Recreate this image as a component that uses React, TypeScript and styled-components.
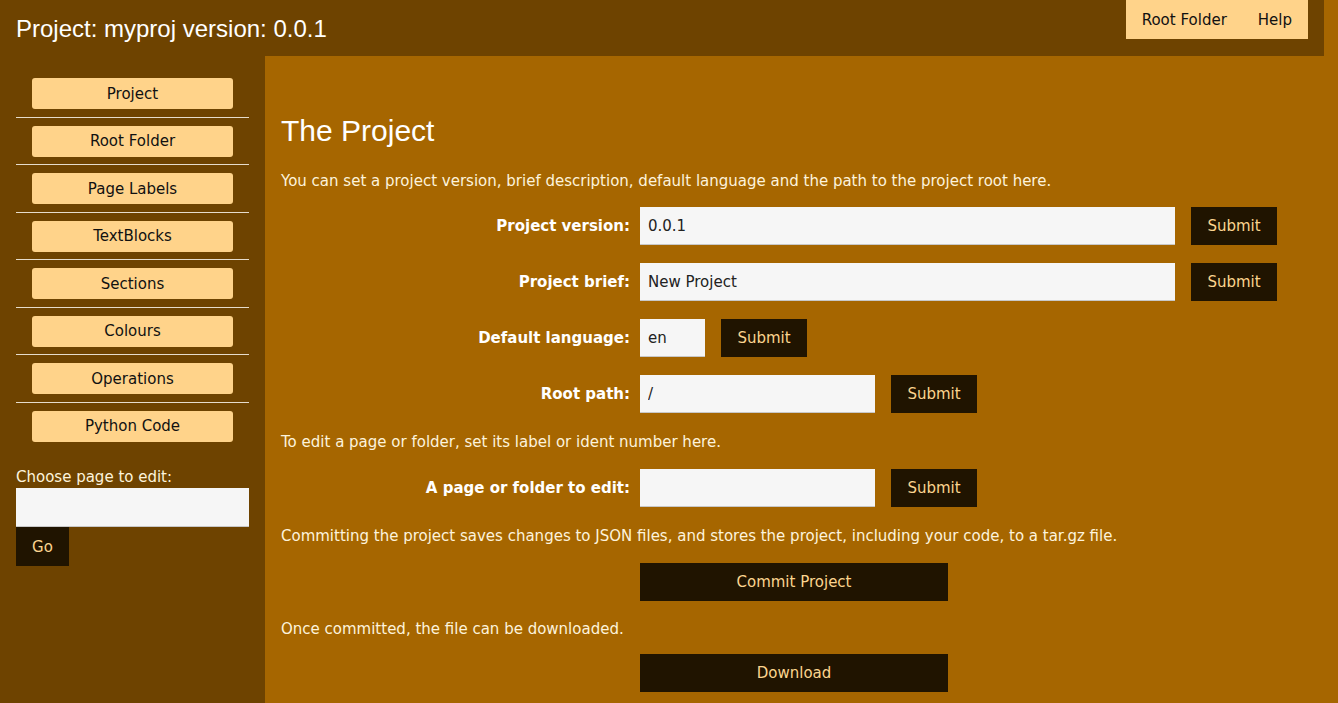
import React from "react";
import styled, { createGlobalStyle } from "styled-components";

const Global = createGlobalStyle`
  html, body { margin: 0; padding: 0; background: #a66600; }
  body { font-family: "DejaVu Sans", Verdana, sans-serif; font-size: 15px; }
  * { box-sizing: border-box; }
`;

const Page = styled.div`
  display: grid;
  grid-template-columns: 265px 1fr;
  grid-template-rows: 56px 1fr;
  height: 100vh;
  overflow: hidden;
`;

const Header = styled.header`
  grid-column: 1 / 3;
  background: #6e4300;
  margin-right: 14px;
  display: flex;
  justify-content: space-between;
  align-items: flex-start;
  padding-left: 16px;
  padding-right: 16px;
`;

const Title = styled.h1`
  margin: 0;
  padding-top: 15px;
  font-family: "Liberation Sans", Arial, sans-serif;
  font-weight: normal;
  font-size: 24px;
  line-height: 28px;
  color: #ffffff;
`;

const TopNav = styled.nav`
  display: flex;
  gap: 31px;
  background: #ffd38a;
  height: 39px;
  align-items: center;
  padding: 0 16px;
`;

const TopLink = styled.a`
  color: #111;
  font-size: 15px;
  text-decoration: none;
  cursor: pointer;
`;

const Sidebar = styled.aside`
  background: #6e4300;
  padding: 14px 16px 0 16px;
  display: flex;
  flex-direction: column;
`;

const NavItem = styled.div`
  padding: 8px 16px 7.5px;
  border-bottom: 1px solid #e6dccb;
  &:last-of-type { border-bottom: none; }
`;

const NavButton = styled.button`
  width: 100%;
  height: 31px;
  border: none;
  border-radius: 3px;
  background: #ffd38a;
  color: #111;
  font-family: "DejaVu Sans", Verdana, sans-serif;
  font-size: 15px;
  cursor: pointer;
`;

const ChooseLabel = styled.label`
  display: block;
  margin-top: 18px;
  color: #fdf3dc;
  font-size: 15px;
  line-height: 20px;
`;

const SideInput = styled.input`
  display: block;
  width: 100%;
  height: 39px;
  margin-top: 1px;
  border: none;
  border-bottom: 1px solid #c8c8c8;
  background: #f6f6f6;
`;

const GoButton = styled.button`
  align-self: flex-start;
  width: 53px;
  height: 39px;
  border: none;
  background: #201400;
  color: #fcd58f;
  font-family: "DejaVu Sans", Verdana, sans-serif;
  font-size: 15px;
`;

const Main = styled.main`
  padding: 58px 16px 0 16px;
  color: #fdf3dc;
`;

const Heading = styled.h2`
  margin: 0;
  font-family: "Liberation Sans", Arial, sans-serif;
  font-weight: normal;
  font-size: 30px;
  line-height: 34px;
  color: #ffffff;
`;

const Para = styled.p`
  margin: 0;
  font-size: 15px;
  line-height: 20px;
  padding-top: ${(p: { $top: number }) => p.$top}px;
`;

const Form = styled.div`
  display: grid;
  grid-template-columns: 349px auto;
  column-gap: 10px;
  row-gap: 18px;
  align-items: center;
  margin-top: ${(p: { $top: number }) => p.$top}px;
`;

const Label = styled.label`
  text-align: right;
  font-weight: bold;
  color: #ffffff;
  font-size: 15px;
`;

const Field = styled.div`
  display: flex;
  align-items: center;
  gap: 16px;
`;

const TextInput = styled.input<{ $w: number }>`
  width: ${(p) => p.$w}px;
  height: 38px;
  border: none;
  border-bottom: 1px solid #c8c8c8;
  background: #f6f6f6;
  padding: 0 8px;
  font-family: "DejaVu Sans", Verdana, sans-serif;
  font-size: 15px;
  color: #222;
`;

const DarkButton = styled.button<{ $w: number }>`
  width: ${(p) => p.$w}px;
  height: 38px;
  border: none;
  background: #201400;
  color: #fcd58f;
  font-family: "DejaVu Sans", Verdana, sans-serif;
  font-size: 15px;
  cursor: pointer;
`;

const WideRow = styled.div`
  padding-left: 359px;
  margin-top: ${(p: { $top: number }) => p.$top}px;
`;

const navItems = [
  "Project",
  "Root Folder",
  "Page Labels",
  "TextBlocks",
  "Sections",
  "Colours",
  "Operations",
  "Python Code",
];

export default function App() {
  return (
    <>
      <Global />
      <Page>
        <Header>
          <Title>Project: myproj version: 0.0.1</Title>
          <TopNav>
            <TopLink>Root Folder</TopLink>
            <TopLink>Help</TopLink>
          </TopNav>
        </Header>
        <Sidebar>
          {navItems.map((n) => (
            <NavItem key={n}>
              <NavButton>{n}</NavButton>
            </NavItem>
          ))}
          <ChooseLabel>Choose page to edit:</ChooseLabel>
          <SideInput />
          <GoButton>Go</GoButton>
        </Sidebar>
        <Main>
          <Heading>The Project</Heading>
          <Para $top={23}>
            You can set a project version, brief description, default language and the path to the project root here.
          </Para>
          <Form $top={16}>
            <Label>Project version:</Label>
            <Field>
              <TextInput $w={535} defaultValue="0.0.1" />
              <DarkButton $w={86}>Submit</DarkButton>
            </Field>
            <Label>Project brief:</Label>
            <Field>
              <TextInput $w={535} defaultValue="New Project" />
              <DarkButton $w={86}>Submit</DarkButton>
            </Field>
            <Label>Default language:</Label>
            <Field>
              <TextInput $w={65} defaultValue="en" />
              <DarkButton $w={86}>Submit</DarkButton>
            </Field>
            <Label>Root path:</Label>
            <Field>
              <TextInput $w={235} defaultValue="/" />
              <DarkButton $w={86}>Submit</DarkButton>
            </Field>
          </Form>
          <Para $top={19}>To edit a page or folder, set its label or ident number here.</Para>
          <Form $top={17}>
            <Label>A page or folder to edit:</Label>
            <Field>
              <TextInput $w={235} />
              <DarkButton $w={86}>Submit</DarkButton>
            </Field>
          </Form>
          <Para $top={19}>
            Committing the project saves changes to JSON files, and stores the project, including your code, to a tar.gz file.
          </Para>
          <WideRow $top={17}>
            <DarkButton $w={308}>Commit Project</DarkButton>
          </WideRow>
          <Para $top={18}>Once committed, the file can be downloaded.</Para>
          <WideRow $top={15}>
            <DarkButton $w={308}>Download</DarkButton>
          </WideRow>
        </Main>
      </Page>
    </>
  );
}
